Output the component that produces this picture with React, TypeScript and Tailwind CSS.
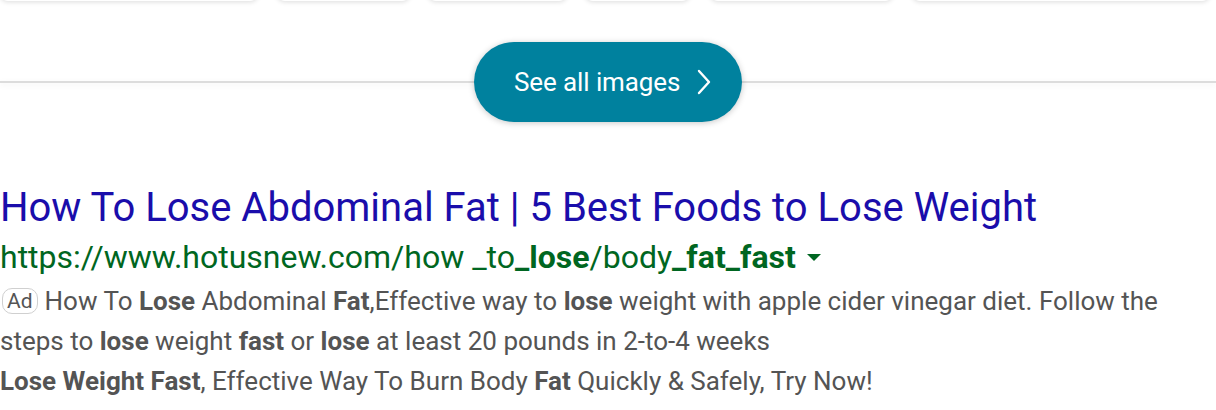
import React from "react";

const cards = [
  [0, 258],
  [277, 410],
  [428, 567],
  [585, 690],
  [710, 893],
  [912, 1210],
];

export default function App() {
  return (
    <div className="w-[1216px] h-[410px] bg-white overflow-hidden" style={{ fontFamily: "Roboto, 'Liberation Sans', sans-serif" }}>
      <div className="relative h-[2px]">
        {cards.map(([a, b], i) => (
          <div
            key={i}
            className="absolute bottom-[1px] h-[40px] rounded-b-[8px] bg-white shadow-[0_1px_5px_rgba(0,0,0,0.14)]"
            style={{ left: a, width: b - a }}
          />
        ))}
      </div>
      <div className="relative h-[120px]">
        <div className="absolute left-0 right-0 top-[79px] h-[2px] bg-[#dcdcdc] shadow-[0_2px_6px_rgba(0,0,0,0.08)]" />
        <div className="relative flex justify-center pt-[40px]">
          <button className="flex items-center h-[80px] w-[268px] rounded-full bg-[#00819e] text-white text-[26px] shadow-[0_1px_6px_rgba(0,0,0,0.22)] pl-[40px]">
            <span className="tracking-[-0.1px]">See all images</span>
            <svg width="16" height="26" viewBox="0 0 16 26" className="ml-[16px]" fill="none">
              <path d="M3 2 L13 13 L3 24" stroke="white" strokeWidth="2.4" strokeLinecap="round" strokeLinejoin="round" />
            </svg>
          </button>
        </div>
      </div>
      <div className="mt-[62px]">
        <div className="text-[40px] leading-[48px] text-[#1a0dab] whitespace-nowrap">
          How To Lose Abdominal Fat | 5 Best Foods to Lose Weight
        </div>
        <div className="mt-[5px] flex items-center text-[32px] leading-[40px] text-[#006621] whitespace-nowrap">
          <span>
            https://www.hotusnew.com/how _to<b className="font-bold">_lose</b>/body<b className="font-bold">_fat_fast</b>
          </span>
          <svg width="14" height="8" viewBox="0 0 14 8" className="ml-[11px] mt-[2px]">
            <path d="M0 0 L14 0 L7 7 Z" fill="#006621" />
          </svg>
        </div>
        <div className="mt-[4px] text-[26px] leading-[40px] text-[#545454]">
          <div className="whitespace-nowrap flex items-center">
            <span className="inline-flex items-center justify-center h-[26px] px-[4px] mr-[7px] ml-[2px] rounded-[10px] border border-[#d0d0d0] text-[21px] leading-none text-[#545454]">Ad</span>
            <span>
              How To <b>Lose</b> Abdominal <b>Fat</b>,Effective way to <b>lose</b> weight with apple cider vinegar diet. Follow the
            </span>
          </div>
          <div className="whitespace-nowrap">
            steps to <b>lose</b> weight <b>fast</b> or <b>lose</b> at least 20 pounds in 2-to-4 weeks
          </div>
          <div className="whitespace-nowrap">
            <b>Lose Weight Fast</b>, Effective Way To Burn Body <b>Fat</b> Quickly &amp; Safely, Try Now!
          </div>
        </div>
      </div>
    </div>
  );
}
